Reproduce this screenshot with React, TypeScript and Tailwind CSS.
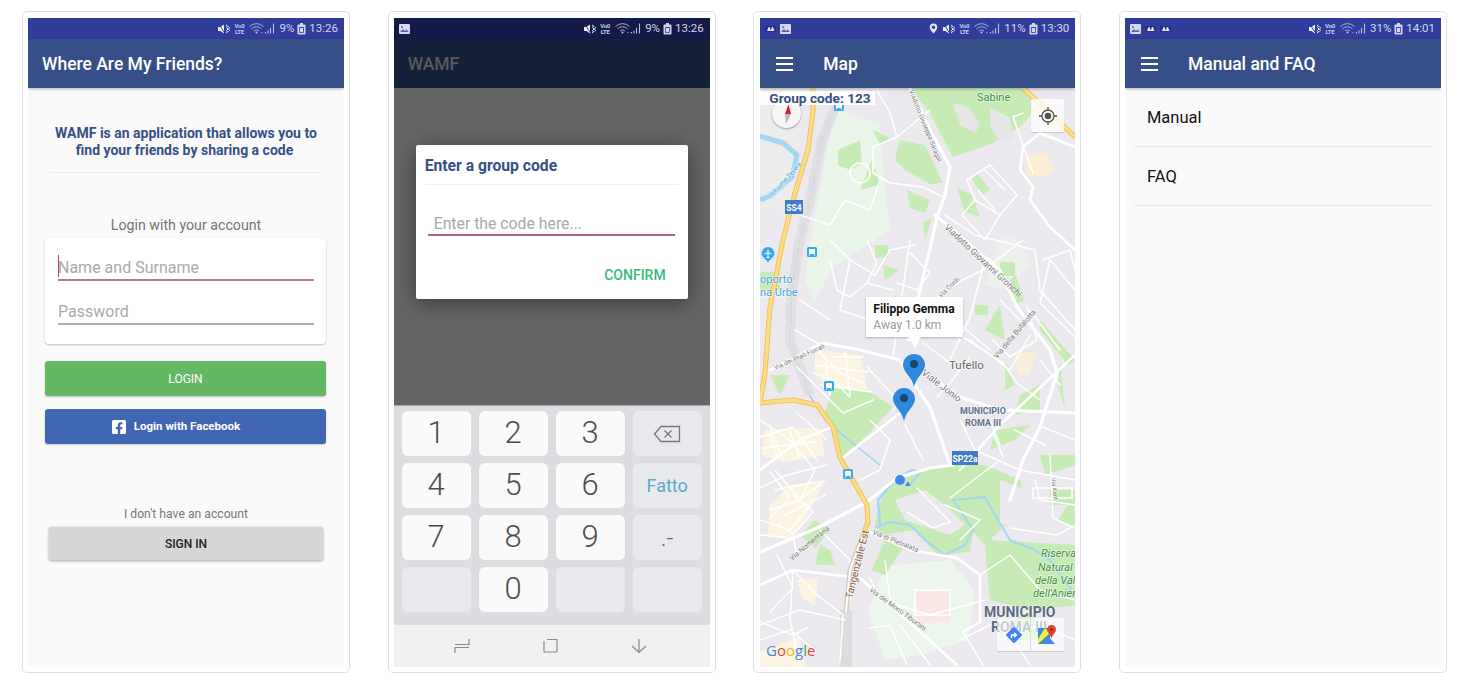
import React from 'react';
import { FaFacebookSquare } from 'react-icons/fa';

const font = { fontFamily: 'Roboto, "Liberation Sans", sans-serif' };

/* status bar bits */
const ImageIcon = () => (
  <svg width="11" height="10" viewBox="0 0 11 10" className="shrink-0">
    <rect x="0" y="0" width="11" height="10" rx="1" fill="#d5d8ea" />
    <path d="M1 8l3-3 2 2 1.500-1.500L10 8z" fill="#5a63a8" />
    <circle cx="3" cy="3" r="1" fill="#5a63a8" />
  </svg>
);

const MiniIcon = () => (
  <svg width="11" height="6" viewBox="0 0 11 6" className="shrink-0">
    <rect width="11" height="6" rx="1" fill="#233087" />
    <path d="M2 5l1.500-4h1L6 5zM5.500 5L7 1h1l1.500 4z" fill="#e3e5f2" />
  </svg>
);

const StatusRight = ({ pct, time, pin }: { pct: string; time: string; pin?: boolean }) => (
  <div className="flex items-center text-[11.500px] leading-none text-[#d3d6ea]">
    {pin && (
      <svg width="9" height="11" viewBox="0 0 9 11" className="mr-[5px]">
        <path d="M4.500 0.500a3.800 3.800 0 0 1 3.800 3.800C8.300 7 4.500 10.500 4.500 10.500S0.700 7 0.700 4.300A3.800 3.800 0 0 1 4.500 0.500z" fill="#e6e8f3" />
        <circle cx="4.500" cy="4.200" r="1.700" fill="#303d9c" />
      </svg>
    )}
    <svg width="12" height="10" viewBox="0 0 12 10">
      <path d="M0 3h2.500L6 0.500v9L2.500 7H0z" fill="#eef0f8" />
      <path d="M1 0.500l6 9" stroke="#303d9c" strokeWidth="1" />
      <path d="M8 1l1.500 1-1 1.500 1.500 1.500-1.500 1.500 1 1.500-1.500 1M10.500 2.500l1 1-1 1.500 1 1.500-1 1" stroke="#eef0f8" strokeWidth="1" fill="none" />
    </svg>
    <div className="ml-[4px] mr-[5px] flex w-[10px] flex-col items-center text-[6px] font-bold leading-[5.500px] tracking-[-0.3px] text-[#c7cbe4]">
      <span>Vo0</span>
      <span>LTE</span>
    </div>
    <svg width="26" height="11" viewBox="0 0 26 11" className="mr-[4px]">
      <path d="M0.500 3.500a10 10 0 0 1 14 0M2.500 5.800a7 7 0 0 1 10 0M5 8a3.500 3.500 0 0 1 5 0" stroke="#a9aed5" strokeWidth="1" fill="none" />
      <circle cx="7.500" cy="9.500" r="1" fill="#c7cbe4" />
      <circle cx="13" cy="9.500" r="0.600" fill="#c7cbe4" />
      <path d="M16.500 10.500V9M19 10.500V7.500M21.500 10.500V5M24.500 10.500V0.500" stroke="#b9bedd" strokeWidth="1.100" />
    </svg>
    <span>{pct}</span>
    <svg width="9" height="12" viewBox="0 0 9 12" className="ml-[3px] mr-[3px]">
      <rect x="0.500" y="1.500" width="8" height="10" rx="1" fill="#d3d6ea" />
      <rect x="3" y="0" width="3" height="2" fill="#d3d6ea" />
      <rect x="2.200" y="4" width="4.600" height="5.800" fill="#303d9c" />
      <rect x="3" y="5" width="3" height="4" fill="#d3d6ea" />
    </svg>
    <span>{time}</span>
  </div>
);

const StatusBar = ({ pct, time, pin, left, dark }: { pct: string; time: string; pin?: boolean; left?: React.ReactNode; dark?: boolean }) => (
  <div className={`flex h-[21px] shrink-0 items-center justify-between pl-[5px] pr-[6px] ${dark ? 'bg-[#141a47]' : 'bg-[#303d9c]'}`}>
    <div className="flex items-center gap-[4px]">{left}</div>
    <StatusRight pct={pct} time={time} pin={pin} />
  </div>
);

const Hamburger = () => (
  <div className="flex w-[17px] flex-col gap-[4px]">
    <div className="h-[2px] bg-white" />
    <div className="h-[2px] bg-white" />
    <div className="h-[2px] bg-white" />
  </div>
);

const AppBar = ({ title, menu }: { title: string; menu?: boolean }) => (
  <div className="relative z-10 flex h-[49px] shrink-0 items-center bg-[#374f87] shadow-[0_1px_3px_rgba(0,0,0,0.3)]">
    {menu ? (
      <div className="flex items-center pl-[16px]">
        <Hamburger />
        <span className="ml-[30px] pt-[2px] text-[17.500px] font-medium text-white">{title}</span>
      </div>
    ) : (
      <span className="pl-[14px] pt-[2px] text-[17.500px] font-medium text-white">{title}</span>
    )}
  </div>
);

const Card = ({ children, className = 'px-[5px]' }: { children: React.ReactNode; className?: string }) => (
  <div className={`h-[662px] w-[328px] rounded-[5px] border border-[#dfe0e4] pb-[5px] pt-[6px] ${className}`}>
    <div className="flex h-full flex-col overflow-hidden bg-[#fafafa]">{children}</div>
  </div>
);

/* first screen */
const LoginScreen = () => (
  <Card>
    <StatusBar pct="9%" time="13:26" />
    <AppBar title="Where Are My Friends?" />
    <div className="flex flex-col items-center">
      <p className="mt-[37px] w-[280px] text-center text-[14px] font-bold leading-[17px] text-[#374f87]">
        <span className="block">WAMF is an application that allows you to</span>
        <span className="block pr-[3px]">find your friends by sharing a code</span>
      </p>
      <div className="mt-[13px] h-px w-[272px] bg-[#ececec]" />
      <p className="mt-[43px] text-[14.200px] leading-[18px] text-[#757575]">Login with your account</p>
      <div className="ml-[-1px] mt-[4px] h-[106px] w-[281px] rounded-[4px] bg-white pl-[13px] pr-[12px] pt-[17px] shadow-[0_1px_2px_rgba(0,0,0,0.25)]">
        <div className="relative h-[26px] border-b-2 border-b-[#b07a8d] text-[16px] leading-[26px] text-[#a9a9a9]">
          <div className="absolute left-0 top-0 h-[22px] w-px bg-[#9c4a66]" />
          Name and Surname
        </div>
        <div className="mt-[18px] h-[26px] border-b-2 border-b-[#adadad] text-[16px] leading-[26px] text-[#a9a9a9]">Password</div>
      </div>
      <button className="ml-[-1px] mt-[17px] flex h-[35px] w-[281px] items-center justify-center rounded-[3px] bg-[#64b863] text-[12px] text-white shadow-[0_1px_2px_rgba(0,0,0,0.25)]">
        LOGIN
      </button>
      <button className="ml-[-1px] mt-[13px] flex h-[35px] w-[281px] items-center justify-center gap-[7px] rounded-[3px] bg-[#4267b2] pr-[20px] text-[11.500px] font-bold text-white shadow-[0_1px_2px_rgba(0,0,0,0.2)]">
        <FaFacebookSquare className="h-[16px] w-[16px]" />
        <span className="pt-[1px]">Login with Facebook</span>
      </button>
      <p className="mt-[62px] text-[12.200px] leading-[16px] text-[#777777]">I don't have an account</p>
      <button className="mt-[5px] flex h-[33px] w-[274px] items-center justify-center rounded-[2px] bg-[#d5d6d6] text-[12px] font-medium text-[#222222] shadow-[0_1px_3px_rgba(0,0,0,0.35)]">
        SIGN IN
      </button>
    </div>
  </Card>
);

/* second screen */
const BackspaceIcon = () => (
  <svg width="28" height="18" viewBox="0 0 28 18">
    <path d="M8 1.500h18.500v15H8L1.500 9z" fill="none" stroke="#777" strokeWidth="1.300" />
    <path d="M11.500 5.500l7 7M18.500 5.500l-7 7" stroke="#777" strokeWidth="1.200" />
  </svg>
);

const Key = ({ children, kind = 'light' }: { children?: React.ReactNode; kind?: 'light' | 'muted' }) => (
  <div
    className={`flex h-[45px] w-[69px] items-center justify-center rounded-[6px] text-[31px] font-light text-[#4d4d4d] ${
      kind === 'light' ? 'bg-[#fafafa]' : 'bg-[#e8e9ec]'
    }`}
  >
    {children}
  </div>
);

const CodeScreen = () => (
  <Card>
    <StatusBar pct="9%" time="13:26" dark left={<ImageIcon />} />
    <div className="flex h-[49px] shrink-0 items-center bg-[#15203a] pl-[14px] pt-[2px] text-[17.500px] font-medium text-[#5a5a5a]">WAMF</div>
    <div className="relative h-[317px] shrink-0 bg-[#666666] pl-[22px] pt-[57px]">
      <div className="h-[154px] w-[272px] rounded-[2px] bg-white px-[9px] shadow-[0_4px_22px_rgba(0,0,0,0.45)]">
        <div className="flex h-[40px] items-center border-b border-b-[#eeeeee] pt-[2px] text-[15.700px] font-bold text-[#374f87]">Enter a group code</div>
        <div className="ml-[3px] mr-[4px] mt-[27px] h-[24px] border-b-2 border-b-[#b5657e] pl-[6px] text-[15.800px] leading-[23px] text-[#a9a9a9]">
          Enter the code here...
        </div>
        <div className="mt-[30px] pr-[13px] text-right text-[14px] font-medium leading-[18px] text-[#3cb878]">CONFIRM</div>
      </div>
    </div>
    <div className="flex-1 border-t border-t-[#a9aaad] bg-[#dcdde1] px-[8px] pt-[5px]">
      <div className="grid grid-cols-[69px_69px_69px_69px] gap-x-[8px] gap-y-[7px]">
        <Key>1</Key>
        <Key>2</Key>
        <Key>3</Key>
        <Key kind="muted"><BackspaceIcon /></Key>
        <Key>4</Key>
        <Key>5</Key>
        <Key>6</Key>
        <Key kind="muted"><span className="text-[18px] font-normal text-[#5aa9cb]">Fatto</span></Key>
        <Key>7</Key>
        <Key>8</Key>
        <Key>9</Key>
        <Key kind="muted"><span className="text-[24px] font-light text-[#666666]">.-</span></Key>
        <Key kind="muted" />
        <Key>0</Key>
        <Key kind="muted" />
        <Key kind="muted" />
      </div>
    </div>
    <div className="flex h-[42px] shrink-0 items-center bg-[#f0f0f0] pl-[60px]">
      <svg width="16" height="16" viewBox="0 0 16 16">
        <path d="M15 1v5.500H1M1 15V9.500h14" stroke="#8a8a8a" strokeWidth="1.200" fill="none" />
      </svg>
      <svg width="16" height="16" viewBox="0 0 16 16" className="ml-[72px]">
        <path d="M5 1.500h10v11.500a1 1 0 0 1-1 1H2V3" stroke="#8a8a8a" strokeWidth="1.200" fill="none" />
      </svg>
      <svg width="16" height="16" viewBox="0 0 16 16" className="ml-[73px]">
        <path d="M8 1v13.500M1 8l7 6.500L15 8" stroke="#8a8a8a" strokeWidth="1.200" fill="none" />
      </svg>
    </div>
  </Card>
);

/* map drawing, coordinates follow the page so the reference can be read off directly */
const mainRoads = [
  'M910 88L930 130 950 167 945 195 937 217 932 240 920 290 908 340',
  'M935 215L1000 270 1017 307 1050 350 1057 373 1040 427 1023 460 1010 500',
  'M823 343L860 350 900 360 915 385 930 407 950 465',
  'M917 367L960 397 1000 410 1075 413',
  'M953 465L930 468 897 478 867 502 817 528 760 552',
  'M900 413L840 460',
  'M1075 355L1000 425 960 470',
  'M770 370L823 343',
  'M760 585L793 570 860 578 957 665',
  'M870 532L910 550 957 558 980 575 980 622 963 632',
  'M760 470L800 440 830 428',
  'M1075 147L1040 133 1023 147 1020 170 1033 187 1030 200 1050 227 1075 250',
];

const streets = [
  'M873 147L897 137 930 110',
  'M873 147V173L890 183 923 187 943 197',
  'M877 90L890 113 897 137',
  'M1023 113L1013 117 1033 173',
  'M967 180L990 165 1017 195 1000 215 975 200z',
  'M975 200L962 215 985 240 1000 215',
  'M985 170L1005 190M978 190L995 210',
  'M945 215L975 235 1035 250 1040 290',
  'M983 267L970 317 950 360',
  'M983 270L1023 240',
  'M893 357L910 240',
  'M830 240L850 260 875 275 890 250 915 245',
  'M850 260L840 310 870 320 895 300',
  'M800 215L830 225 845 200 870 210 880 180',
  'M1050 260L1075 290M1040 290L1075 330M1030 310L1060 350',
  'M970 340L1010 370 1030 335M955 320L990 350',
  'M960 420L975 450 1020 470M990 420L1000 445',
  'M1050 455L1053 518 1075 528',
  'M1020 470L1075 480M1035 480L1040 500 1075 505',
  'M950 498L1000 460',
  'M760 420L790 440 815 470 800 500 770 510',
  'M775 470L800 500 825 480M760 520L790 530 810 505',
  'M870 420L890 440 880 470 860 480',
  'M820 530L850 560 850 600',
  'M793 570L790 620 800 665M760 625L800 610 845 620',
  'M870 578L880 600 930 615 985 600',
  'M885 560L890 600M915 590H950V615H915z',
  'M960 640L1000 620 1030 665M900 625L930 665',
  'M923 460L905 425',
  'M980 575L1010 555 1040 590 1075 600',
  'M1000 640L1040 625 1075 640',
  'M760 640L790 630 815 650',
  'M945 505L980 520 960 540',
  'M830 260L837 290 850 297 867 283 893 290',
  'M867 240L877 263 867 283',
  'M910 253L930 273 917 290 897 283',
  'M937 297L963 280 983 270',
  'M963 337L1003 363 1017 383 1040 400',
  'M923 343L950 363M970 357L950 383 937 397',
  'M1043 260L1070 250 1075 270',
  'M1050 260L1040 303 1075 337',
  'M1027 307L1037 340 1010 357 993 340',
  'M993 433L1003 457M1043 427L1075 440',
  'M797 367L843 413 873 400',
  'M817 350L840 373 863 383M833 357H863',
  'M813 373L833 380 850 397',
  'M867 367L900 403 893 410',
  'M760 437L793 427 817 460M770 427L783 460M797 413L827 440',
  'M760 488L787 475 827 465',
  'M770 472L790 498 770 518',
  'M793 495L813 512 793 535 780 525',
  'M760 535L793 538 797 555',
  'M777 555L793 588 770 612',
  'M793 570L817 595 843 615 840 662',
  'M760 622L793 635 807 628',
  'M917 488L950 522 933 528 907 512',
  'M870 628L890 625 907 665',
  'M963 632L983 665',
  'M1010 528L1057 535 1075 525',
  'M1033 488H1072V498H1033z',
  'M825 355L830 395M845 352L850 395M815 365L868 372M820 385L872 392',
  'M770 435L778 460M790 432L800 458M762 448L815 442',
  'M775 490L815 482M785 515L825 495',
  'M800 300L830 320M795 330L820 345',
  'M1000 300L1020 320M1040 360L1060 385M1015 430L1045 445',
  'M940 320L960 340M910 300L925 330',
];

const MapText = ({ x, y, r = 0, size, fill = '#7a7a7a', children, weight, italic }: { x: number; y: number; r?: number; size: number; fill?: string; children: React.ReactNode; weight?: number; italic?: boolean }) => (
  <text x={x} y={y} fontSize={size} fill={fill} fontWeight={weight} fontStyle={italic ? 'italic' : undefined} transform={r ? `rotate(${r} ${x} ${y})` : undefined} stroke="#ffffff" strokeOpacity={0.55} strokeWidth={1.500} paintOrder="stroke">
    {children}
  </text>
);

const TrainIcon = ({ x, y }: { x: number; y: number }) => (
  <g>
    <rect x={x - 5} y={y - 5} width={10} height={10} rx={1.500} fill="#38a9e8" />
    <rect x={x - 3} y={y - 3} width={6} height={5} rx={1} fill="#ffffff" />
    <path d={`M${x - 3} ${y + 4}l1-2M${x + 3} ${y + 4}l-1-2`} stroke="#ffffff" strokeWidth={0.800} />
  </g>
);

const Pin = ({ x, y }: { x: number; y: number }) => (
  <g>
    <path d={`M${x} ${y - 11}a11 11 0 0 1 11 11C${x + 11} ${y + 7} ${x + 2} ${y + 12} ${x} ${y + 22}C${x - 2} ${y + 12} ${x - 11} ${y + 7} ${x - 11} ${y}a11 11 0 0 1 11 -11z`} fill="#2f88dd" />
    <circle cx={x} cy={y - 1} r={4} fill="#17466f" />
  </g>
);

const RoadBadge = ({ x, y, w, label }: { x: number; y: number; w: number; label: string }) => (
  <g>
    <rect x={x} y={y} width={w} height={14} fill="#3f7cc4" />
    <text x={x + w / 2} y={y + 10.500} fontSize={8.500} fontWeight={700} fill="#ffffff" textAnchor="middle">{label}</text>
  </g>
);

const MapDrawing = () => (
  <svg viewBox="760 88 315 579" className="block h-full w-full" style={font}>
    <rect x="760" y="88" width="315" height="579" fill="#ebe9ed" />
    <path d="M760 88H805L790 215 760 205z" fill="#ececec" />
    {/* pale green */}
    <path d="M835 108L880 125 885 190 890 230 860 250 835 265 815 300 805 280 815 215z" fill="#eaf5ea" />
    <path d="M885 566L950 560 975 590 968 640 920 655 885 660 868 610z" fill="#ecf6ec" />
    <path d="M1000 240L1015 235 1030 262 1010 290 985 285z" fill="#edf0ed" />
    {/* beige quarters */}
    <path d="M815 350L860 355 868 392 850 398 830 390 815 372z" fill="#fcf4e2" />
    <path d="M765 430L820 428 825 455 785 462 762 455z" fill="#fcf4e2" />
    <path d="M790 485L825 480 808 515 790 540 768 535 770 505z" fill="#fcf4e2" />
    <path d="M797 580L818 578 815 605 802 598z" fill="#fcf4e2" />
    <path d="M760 652L800 636 806 667H760z" fill="#fcf4e2" />
    <path d="M1025 158L1045 152 1056 170 1040 178 1028 175z" fill="#fbeed5" />
    <path d="M1015 355L1038 350 1028 375 1018 375z" fill="#f9efd9" />
    <path d="M915 592L950 590 950 622 917 624z" fill="#fbe6e6" />
    {/* park */}
    <g fill="#c6ebb4">
      <path d="M910 88L930 113 940 133 953 157 993 143 1020 127 1033 113 1030 97 1022 88z" />
      <path d="M900 140L925 145 943 183 930 184 905 170 895 160z" />
      <path d="M838 150L860 140 862 163 850 170 838 165z" />
      <path d="M873 130L890 138 880 145z" />
      <path d="M872 160L880 185 860 190z" />
      <path d="M957 187L972 195 980 217 965 212zM977 173L990 190 983 195 972 180z" />
      <path d="M907 190L930 200 925 213 910 208zM923 222L932 218 925 240z" />
      <path d="M813 240L825 235 830 250 818 255z" fill="#eaf5ea" />
      <path d="M825 412L833 388 867 390 893 407 870 432 842 457 835 430z" />
      <path d="M875 525L883 492 897 478 917 470 940 465 985 465 1020 480 1025 510 1005 525 990 540 1075 545 1075 605 1030 610 990 600 985 545 973 532 970 552 937 555 915 530 880 535z" />
      <path d="M1000 480L1040 495 1035 520 1000 525z" fill="#ebe9ed" />
      <path d="M895 500L925 490 945 505 965 525 950 535 905 520z" fill="#ebe9ed" />
      <path d="M1075 530L1058 520 1075 495z" />
      <path d="M885 540L905 545 885 575 872 570z" />
      <path d="M815 520L830 530 815 548 800 535zM820 545L830 550 835 565 815 565z" />
      <path d="M1010 280L1016 275 1024 300 1014 305zM975 305H988V315H975zM1000 262H1015V276H1000zM985 330L1000 305 1005 340z" />
      <path d="M1005 360L1015 385 1005 390zM1020 395L1040 385 1040 410 1015 415zM995 430L1030 425 1015 440 990 450z" />
      <path d="M1040 320L1075 360 1068 365 1040 330z" />
      <path d="M1060 360L1065 410 1058 385z" />
      <path d="M760 272H780V290H760z" />
      <path d="M875 245H888V258H875zM883 265L900 270 885 280z" />
      <path d="M1050 490H1075V505H1050z" />
      <path d="M1040 455H1075V465L1045 475z" />
      <path d="M770 375H790L780 395z" />
      <path d="M1000 630L1030 610 1048 640 1030 640z" />
    </g>
    {/* gaps in the park */}
    <path d="M953 103L970 108 980 125 975 133 960 125z" fill="#e6e6e6" />
    <path d="M990 107L1010 118 1013 140 998 140 990 125z" fill="#e6e6e6" />
    {/* water */}
    <g fill="none" stroke="#a6d6f6" strokeLinejoin="round">
      <path d="M760 136L783 143 797 155 792 177 770 196 760 200" strokeWidth={5} />
      <path d="M880 525L878 500 895 480 912 470 920 472 910 485" strokeWidth={2.500} />
      <path d="M875 528L890 522 910 525 925 540 945 555 965 545 973 530 960 510 953 500 985 497 995 515 1010 540 1035 550 1050 560 1075 595" strokeWidth={2} />
      <path d="M800 380L825 420 855 445 880 465" strokeWidth={1.500} stroke="#9ed0ef" />
    </g>
    {/* rail */}
    <path d="M838 100L822 140 812 190 800 240 792 290 790 340 810 395" fill="none" stroke="#dfdfe3" strokeWidth={10} />
    <path d="M838 100L822 140 812 190 800 240 792 290 790 340 810 395" fill="none" stroke="#cfd0d3" strokeWidth={0.800} strokeDasharray="6 3" />
    <path d="M846 610V667" stroke="#dcdcdc" strokeWidth={12} />
    {/* roads */}
    <g fill="none" stroke="#ffffff" strokeLinecap="round" strokeLinejoin="round">
      {streets.map((d, i) => (
        <path key={i} d={d} strokeWidth={1.500} />
      ))}
      <circle cx="860" cy="173" r="10" strokeWidth={1.500} />
      {mainRoads.map((d, i) => (
        <path key={i} d={d} strokeWidth={i < 5 ? 3.200 : 2.600} />
      ))}
    </g>
    {/* motorways */}
    <g fill="none" strokeLinejoin="round">
      <g stroke="#efbd58" strokeWidth={5}>
        <path d="M813 88V112L808 150 793 200 783 240 770 307 765 373 760 403" />
        <path d="M760 403L793 400 817 405 833 427 840 458 850 475 867 505 868 522 863 535" />
        <path d="M1023 88L1052 115 1075 137" />
      </g>
      <g stroke="#fcdc82" strokeWidth={3.400}>
        <path d="M813 88V112L808 150 793 200 783 240 770 307 765 373 760 403" />
        <path d="M760 403L793 400 817 405 833 427 840 458 850 475 867 505 868 522 863 535" />
        <path d="M1023 88L1052 115 1075 137" />
      </g>
      <path d="M863 535L850 570 846 612" stroke="#cfcdc8" strokeWidth={5} />
      <path d="M863 535L850 570 846 612" stroke="#ffffff" strokeWidth={2} />
    </g>
    <path d="M1023 88L1052 115" stroke="#fff" strokeWidth={0.600} fill="none" />
    {/* labels */}
    <MapText x={977} y={101} size={11} fill="#3d8f45">Sabine</MapText>
    <MapText x={909} y={91} r={68} size={6.500}>Viadotto Giuseppe Saragat</MapText>
    <MapText x={776} y={193} r={-48} size={6.500} fill="#3e9ad8">Fiume Tevere</MapText>
    <MapText x={944} y={228} r={43} size={8.800}>Viadotto Giovanni Gronchi</MapText>
    <MapText x={760} y={283} size={11} fill="#4aa5dc">oporto</MapText>
    <MapText x={760} y={296} size={11} fill="#4aa5dc">na Urbe</MapText>
    <MapText x={775} y={370} r={-24} size={6.500}>Via dei Prati Fiscali</MapText>
    <MapText x={941} y={298} r={-44} size={6.500}>Via Conti</MapText>
    <MapText x={949} y={369} size={11.500} fill="#666666">Tufello</MapText>
    <MapText x={921} y={374} r={37} size={9.500}>Viale Jonio</MapText>
    <MapText x={997} y={359} r={-50} size={7.500}>Via della Bufalotta</MapText>
    <MapText x={960} y={414} size={9} fill="#60708a" weight={700}>MUNICIPIO</MapText>
    <MapText x={965} y={426} size={9} fill="#60708a" weight={700}>ROMA III</MapText>
    <MapText x={1051} y={478} r={82} size={6}>Via Kant</MapText>
    <MapText x={872} y={534} r={22} size={7}>Via di Pietralata</MapText>
    <MapText x={852} y={599} r={-76} size={10} fill="#8a6240">Tangenziale Est</MapText>
    <MapText x={792} y={561} r={-40} size={7.200}>Via Nomentana</MapText>
    <MapText x={869} y={591} r={36} size={7}>Via dei Monti Tiburtini</MapText>
    <MapText x={1041} y={557} size={11} fill="#3d8f45" italic>Riserva</MapText>
    <MapText x={1038} y={571} size={11} fill="#3d8f45" italic>Natural</MapText>
    <MapText x={1035} y={584} size={11} fill="#3d8f45" italic>della Val</MapText>
    <MapText x={1033} y={597} size={11} fill="#3d8f45" italic>dell'Anier</MapText>
    <MapText x={984} y={617} size={14} fill="#5c6b82" weight={700}>MUNICIPIO</MapText>
    <MapText x={991} y={632} size={14} fill="#5c6b82" weight={700}>ROMA III</MapText>
    <RoadBadge x={785} y={200} w={18} label="SS4" />
    <RoadBadge x={952} y={451} w={26} label="SP22a" />
    <TrainIcon x={839} y={106} />
    <TrainIcon x={812} y={252} />
    <TrainIcon x={829} y={386} />
    <TrainIcon x={848} y={474} />
    {/* airport */}
    <path d="M768 247a6.500 6.500 0 0 1 6.500 6.500c0 3.500-4 5-6.500 9-2.500-4-6.500-5.500-6.500-9A6.500 6.500 0 0 1 768 247z" fill="#38a9e8" />
    <path d="M768 249.500v8M764.500 254l3.500-1.500 3.500 1.500M766.500 257.500h3" stroke="#ffffff" strokeWidth={1} fill="none" />
    <Pin x={914} y={365} />
    <Pin x={904} y={399} />
    <circle cx="900" cy="480" r="5" fill="#4285f4" />
    <path d="M905 486l3-5 2.500 5z" fill="#4285f4" />
    <text x={766} y={656} fontSize={15} fontWeight={500} style={{ fontFamily: '"Open Sans", sans-serif' }}>
      <tspan fill="#4285f4">G</tspan>
      <tspan fill="#ea4335">o</tspan>
      <tspan fill="#fbbc05">o</tspan>
      <tspan fill="#4285f4">g</tspan>
      <tspan fill="#34a853">l</tspan>
      <tspan fill="#ea4335">e</tspan>
    </text>
  </svg>
);

const MapScreen = () => (
  <Card className="pl-[6px] pr-[5px]">
    <StatusBar pct="11%" time="13:30" pin left={<><MiniIcon /><ImageIcon /></>} />
    <AppBar title="Map" menu />
    <div className="relative min-h-0 flex-1">
      <MapDrawing />
      {/* compass */}
      <div className="absolute left-[12px] top-[11px] flex h-[29px] w-[29px] items-center justify-center rounded-full bg-[#f6f6f6] shadow-[0_1px_2px_rgba(0,0,0,0.35)]">
        <svg width="10" height="20" viewBox="0 0 10 20">
          <path d="M6.500 0L9 10H3z" fill="#d8242c" />
          <path d="M3 10h6L4 20z" fill="#b9b9b9" />
        </svg>
      </div>
      <div className="absolute left-0 top-[3px] bg-white/90 pl-[9px] pr-[4px] text-[13.700px] font-bold leading-[14px] text-[#374f87]">Group code: 123</div>
      {/* my location */}
      <div className="absolute left-[271px] top-[11px] flex h-[33px] w-[33px] items-center justify-center rounded-[2px] bg-white/75 shadow-[0_1px_1px_rgba(0,0,0,0.15)]">
        <svg width="20" height="20" viewBox="0 0 20 20">
          <circle cx="10" cy="10" r="6" fill="none" stroke="#555" strokeWidth="1.300" />
          <circle cx="10" cy="10" r="3.300" fill="#555" />
          <path d="M10 1v3M10 16v3M1 10h3M16 10h3" stroke="#555" strokeWidth="1.300" />
        </svg>
      </div>
      {/* info window */}
      <div className="absolute left-[106px] top-[209px] h-[40px] w-[97px] bg-white pl-[7px] pt-[4px] shadow-[0_1px_2px_rgba(0,0,0,0.25)]">
        <p className="text-[12px] font-bold leading-[16px] text-[#111111]">Filippo Gemma</p>
        <p className="text-[12px] leading-[17px] text-[#9a9a9a]">Away 1.0 km</p>
        <div className="absolute left-[43px] top-[40px] h-0 w-0 border-x-[6px] border-t-[12px] border-x-transparent border-t-white" />
      </div>
      {/* map toolbar */}
      <div className="absolute left-[237px] top-[530px] flex h-[33px] w-[67px] rounded-[2px] bg-white/65 shadow-[0_1px_1px_rgba(0,0,0,0.15)]">
        <div className="flex w-[34px] items-center justify-center border-r border-r-[#dddddd]">
          <svg width="18" height="18" viewBox="0 0 18 18">
            <rect x="3" y="3" width="12" height="12" rx="1.500" transform="rotate(45 9 9)" fill="#4285f4" />
            <path d="M6.500 12V9h4M9 6.800L11.500 9 9 11.200" stroke="#fff" strokeWidth="1.300" fill="none" />
          </svg>
        </div>
        <div className="flex flex-1 items-center justify-center">
          <svg width="19" height="20" viewBox="0 0 19 20">
            <path d="M0 3h12v16H0z" fill="#34a853" />
            <path d="M0 3h7L0 10z" fill="#4285f4" />
            <path d="M3 19l7-8 7 8z" fill="#4285f4" />
            <path d="M7 3l5 5-12 11v-5z" fill="#fbe36a" />
            <path d="M13.500 0a4.500 4.500 0 0 1 4.500 4.500c0 3-3 4.500-4.500 9-1.500-4.500-4.500-6-4.500-9A4.500 4.500 0 0 1 13.500 0z" fill="#db4437" />
            <circle cx="13.500" cy="4.500" r="1.500" fill="#8f2a20" />
          </svg>
        </div>
      </div>
    </div>
  </Card>
);

/* fourth screen */
const ManualScreen = () => (
  <Card>
    <StatusBar pct="31%" time="14:01" left={<><ImageIcon /><MiniIcon /><MiniIcon /></>} />
    <AppBar title="Manual and FAQ" menu />
    <div className="px-[9px] text-[16.500px] text-[#111111]">
      <div className="flex h-[59px] items-center border-b border-b-[#e6e6e6] pl-[13px] pt-[2px]">Manual</div>
      <div className="flex h-[59px] items-center border-b border-b-[#e6e6e6] pl-[13px] pt-[2px]">FAQ</div>
    </div>
  </Card>
);

export default function App() {
  return (
    <div className="flex h-[695px] w-[1466px] items-start justify-between overflow-hidden bg-white pl-[22px] pr-[19px] pt-[11px]" style={font}>
      <LoginScreen />
      <CodeScreen />
      <MapScreen />
      <ManualScreen />
    </div>
  );
}
